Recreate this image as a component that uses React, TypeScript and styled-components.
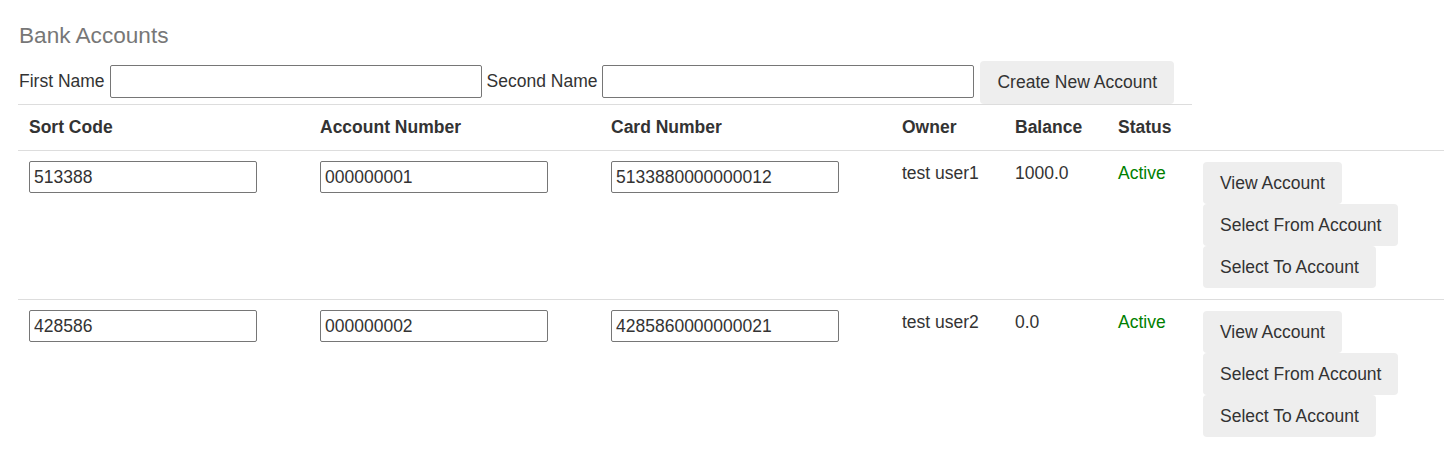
import styled, { createGlobalStyle } from "styled-components";

const GlobalStyle = createGlobalStyle`
  body {
    margin: 0;
    font-family: "Liberation Sans", Arial, sans-serif;
    font-size: 17.5px;
    color: #333;
    background: #fff;
  }
`;

const Page = styled.div`
  padding: 20px 0 0 18px;
`;
const Title = styled.h2`
  margin: 0 0 10px 1px;
  font-size: 22.6px;
  font-weight: normal;
  line-height: 31px;
  color: #777;
`;
const Form = styled.div`
  display: flex;
  align-items: center;
  height: 43px;
`;
const Label = styled.label<{ $gap?: number }>`
  margin: -3px 5px 0 ${(p) => p.$gap ?? 1}px;
  line-height: 22px;
  white-space: nowrap;
`;
const TextInput = styled.input<{ $width: number }>`
  box-sizing: border-box;
  width: ${(p) => p.$width}px;
  height: 33px;
  margin-top: -2px;
  padding: 0 4px;
  border: 1px solid #767676;
  border-radius: 2px;
  font-family: inherit;
  font-size: 17.5px;
  color: #333;
`;
const Button = styled.button`
  box-sizing: border-box;
  height: 42px;
  padding: 0 17px;
  border: none;
  border-radius: 4px;
  background: #eee;
  font-family: inherit;
  font-size: 17.5px;
  color: #333;
  white-space: nowrap;
  cursor: pointer;
  &:hover {
    background: #e2e2e2;
  }
`;
const CreateButton = styled(Button)`
  height: 43px;
  margin-left: 6px;
  align-self: flex-start;
`;
const Table = styled.table`
  width: 100%;
  table-layout: fixed;
  border-collapse: collapse;
`;
const Th = styled.th<{ $width?: number }>`
  box-sizing: border-box;
  width: ${(p) => (p.$width ? `${p.$width}px` : "auto")};
  padding: 11px 11px 12px;
  border-top: 1px solid #ddd;
  text-align: left;
  font-weight: bold;
  line-height: 22px;
`;
const Td = styled.td`
  padding: 11px 11px 11px;
  border-top: 1px solid #ddd;
  vertical-align: top;
  line-height: 22px;
  white-space: nowrap;
`;
const CellInput = styled(TextInput)`
  display: block;
  height: 32px;
  margin: -1px 0 0;
`;
const Status = styled.span`
  color: green;
`;
const Actions = styled.div`
  display: flex;
  flex-direction: column;
  align-items: flex-start;
`;

const accounts = [
  { sort: "513388", number: "000000001", card: "5133880000000012", owner: "test user1", balance: "1000.0" },
  { sort: "428586", number: "000000002", card: "4285860000000021", owner: "test user2", balance: "0.0" },
];

const App = () => {
  return (
    <Page>
      <GlobalStyle />
      <Title>Bank Accounts</Title>
      <Form>
        <Label>First Name</Label>
        <TextInput $width={372} />
        <Label $gap={5}>Second Name</Label>
        <TextInput $width={372} />
        <CreateButton>Create New Account</CreateButton>
      </Form>
      <Table>
        <thead>
          <tr>
            <Th $width={291}>Sort Code</Th>
            <Th $width={291}>Account Number</Th>
            <Th $width={291}>Card Number</Th>
            <Th $width={113}>Owner</Th>
            <Th $width={103}>Balance</Th>
            <Th $width={85}>Status</Th>
          </tr>
        </thead>
        <tbody>
          {accounts.map((a) => (
            <tr key={a.number}>
              <Td>
                <CellInput $width={228} defaultValue={a.sort} />
              </Td>
              <Td>
                <CellInput $width={228} defaultValue={a.number} />
              </Td>
              <Td>
                <CellInput $width={228} defaultValue={a.card} />
              </Td>
              <Td>{a.owner}</Td>
              <Td>{a.balance}</Td>
              <Td>
                <Status>Active</Status>
              </Td>
              <Td>
                <Actions>
                  <Button>View Account</Button>
                  <Button>Select From Account</Button>
                  <Button>Select To Account</Button>
                </Actions>
              </Td>
            </tr>
          ))}
        </tbody>
      </Table>
    </Page>
  );
};

export default App;
